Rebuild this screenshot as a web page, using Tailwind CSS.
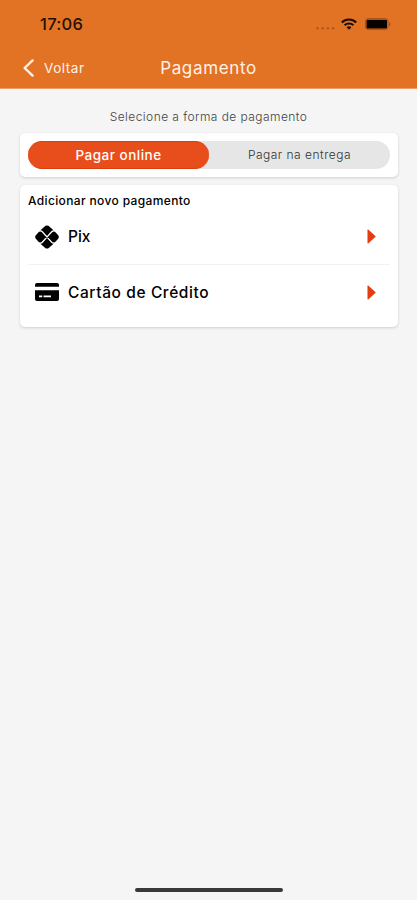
<!DOCTYPE html>
<html lang="pt-BR">
<head>
    <meta charset="UTF-8">
    <meta name="viewport" content="width=device-width, initial-scale=1.0">
    <title>Pagamento</title>
    <script src="https://cdn.jsdelivr.net/npm/@tailwindcss/browser@4"></script>
</head>
<body class="bg-[#f5f5f5] font-['Inter',sans-serif] text-black">
    <div class="h-[900px] w-full flex flex-col overflow-hidden">

        <header class="h-[89px] shrink-0 bg-[#e27224] border-b border-[#ee9b65]">
            <!-- Status bar -->
            <div class="h-12 pl-10 pr-[26px] flex items-center justify-between">
                <span class="text-[16.5px] font-medium leading-none tracking-[0.3px] text-[#241005]">17:06</span>
                <div class="flex items-center">
                    <svg class="w-[19px] h-3 mr-[6px]" viewBox="0 0 19 12" fill="#b4581b">
                        <circle cx="1.5" cy="10.3" r="1.2" />
                        <circle cx="6.7" cy="10.3" r="1.2" />
                        <circle cx="11.9" cy="10.3" r="1.2" />
                        <circle cx="17.1" cy="10.3" r="1.2" />
                    </svg>
                    <svg class="w-4 h-3 mr-2" viewBox="0 0 16 12" fill="none" stroke="#1c0d04" stroke-width="2.1">
                        <path d="M.8 4.4a10.4 10.4 0 0 1 14.4 0" />
                        <path d="M3.6 7.3a6.4 6.4 0 0 1 8.8 0" />
                        <path d="M8 11.8 5.6 9.3a3.5 3.5 0 0 1 4.8 0Z" fill="#1c0d04" stroke="none" />
                    </svg>
                    <svg class="w-[26px] h-3" viewBox="0 0 26 12">
                        <rect x=".5" y=".5" width="22.5" height="11" rx="2.5" fill="none" stroke="#a9531a" />
                        <rect x="1.5" y="1.7" width="20.5" height="8.8" rx="1" fill="#050200" />
                        <path d="M24 4v4.4c2-.9 2-3.5 0-4.4Z" fill="#a9531a" />
                    </svg>
                </div>
            </div>
            <!-- Navigation -->
            <div class="h-10 px-[23px] grid grid-cols-[1fr_auto_1fr] items-center text-[#fff1e8]">
                <a href="#" class="flex items-center gap-[10px]">
                    <svg class="w-[11px] h-[18px]" viewBox="0 0 11 18" fill="none" stroke="currentColor" stroke-width="2.4" stroke-linecap="round" stroke-linejoin="round">
                        <path d="M9.6 1.4 1.6 9l8 7.6" />
                    </svg>
                    <span class="text-[13.5px] leading-none tracking-[0.55px] mt-[2px]">Voltar</span>
                </a>
                <h1 class="text-[17px] leading-none tracking-[0.65px]">Pagamento</h1>
            </div>
        </header>

        <main class="grow px-5 pt-[19px]">
            <p class="h-[25px] pt-px text-center text-[12px] leading-4 tracking-[0.44px] font-light text-[#444]">Selecione a forma de pagamento</p>

            <!-- Payment mode -->
            <section class="h-11 w-[378px] p-2 bg-white rounded-[5px] shadow-[0_1px_3px_rgba(0,0,0,0.16)]">
                <div class="h-7 flex rounded-full bg-[#e6e6e6] text-center leading-7">
                    <button class="w-[181px] rounded-full bg-[#e84e1b] border-y border-[#df3e0b] leading-[26px] text-[13.5px] tracking-[0.5px] font-medium text-white">Pagar online</button>
                    <button class="grow text-[12px] tracking-[0.5px] font-light text-[#333]">Pagar na entrega</button>
                </div>
            </section>

            <!-- Payment methods -->
            <section class="mt-2 h-[142px] w-[378px] px-2 bg-white rounded-[5px] shadow-[0_1px_3px_rgba(0,0,0,0.16)]">
                <h2 class="h-6 pt-2 text-[12px] leading-4 tracking-[0.36px] font-medium">Adicionar novo pagamento</h2>
                <a href="#" class="h-14 pl-[7px] pr-[14px] flex items-center border-b border-[#f2f2f2]">
                    <svg class="w-6 h-6 mr-[9px]" viewBox="0 0 24 24">
                        <path d="M5.2 5.5 10.5.8Q12 0 13.5.8l5.3 4.7-6.8 6.5ZM5.2 18.5l5.3 4.7q1.5.8 3 0l5.3-4.7L12 12ZM4.5 6.2h2.2L12 12l-5.3 5.8H4.5L.6 13.5q-.8-1.5 0-3ZM19.5 6.2h-2.2L12 12l5.3 5.8h2.2l3.9-4.3q.8-1.5 0-3Z" />
                        <path d="M4 5.9h1.8q.7 0 1.3.6l9.8 11q.6.6 1.3.6H20M4 18.1h1.8q.7 0 1.3-.6l9.8-11q.6-.6 1.3-.6H20" fill="none" stroke="#fff" stroke-width="1.2" />
                    </svg>
                    <span class="grow pt-px text-[15.5px] font-medium">Pix</span>
                    <svg class="w-[9px] h-[15px]" viewBox="0 0 9 15"><path d="M.5 1.3Q.5 0 1.5.8l6.8 6.1q.6.6 0 1.2l-6.8 6.1q-1 .8-1-.5Z" fill="#e23c10" /></svg>
                </a>
                <a href="#" class="h-[54px] pl-[7px] pr-[14px] flex items-center">
                    <svg class="w-6 h-[18px] mr-[9px]" viewBox="0 0 24 18">
                        <path d="M0 3.7V2Q0 0 2 0h20q2 0 2 2v1.7Z" />
                        <path d="M0 7.2h24V16q0 2-2 2H2q-2 0-2-2Z" />
                        <path d="M4 13.4h3.2M8.5 13.4H16" stroke="#fff" stroke-width="1.6" />
                    </svg>
                    <span class="grow pt-px text-[15.5px] tracking-[0.6px] font-medium">Cartão de Crédito</span>
                    <svg class="w-[9px] h-[15px]" viewBox="0 0 9 15"><path d="M.5 1.3Q.5 0 1.5.8l6.8 6.1q.6.6 0 1.2l-6.8 6.1q-1 .8-1-.5Z" fill="#e23c10" /></svg>
                </a>
            </section>
        </main>

        <!-- Home indicator -->
        <footer class="h-3 pl-px shrink-0 flex justify-center">
            <div class="w-[148px] h-1 rounded-full bg-[#393939]"></div>
        </footer>
    </div>
</body>
</html>
